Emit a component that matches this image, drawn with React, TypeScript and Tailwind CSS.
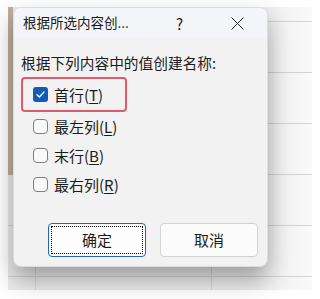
const FONT = "font-['Noto_Sans_CJK_SC','Noto_Sans',sans-serif]";

function CheckBox({ checked }: { checked?: boolean }) {
  if (checked) {
    return (
      <span className="w-[15px] h-[15px] rounded-[3px] bg-[#0f5bb5] flex items-center justify-center shrink-0">
        <svg width="11" height="11" viewBox="0 0 11 11">
          <polyline points="2,5.8 4.4,8 9,3" fill="none" stroke="#ffffff" strokeWidth="1.3" strokeLinecap="round" strokeLinejoin="round" />
        </svg>
      </span>
    );
  }
  return <span className="w-[15px] h-[15px] rounded-[4px] border border-[#7e7e7e] bg-[#f9f9f9] shrink-0" />;
}

function Option({ label, hot, checked }: { label: string; hot: string; checked?: boolean }) {
  return (
    <div className="flex items-center gap-[6px]">
      <CheckBox checked={checked} />
      <span className="text-[15px] leading-none text-[#1b1b1b]">
        {label}(<span className="underline underline-offset-2 decoration-1">{hot}</span>)
      </span>
    </div>
  );
}

export default function App() {
  return (
    <div className={`w-[319px] h-[299px] bg-white pt-[7px] pl-[8px] ${FONT}`}>
      <div className="w-[304px] h-[283px] flex bg-[#f3f3f3] bg-[repeating-linear-gradient(to_bottom,transparent_0,transparent_14px,#d2d2d2_14px,#d2d2d2_15px,transparent_15px,transparent_51px),linear-gradient(to_right,transparent_27px,#d6d6d6_27px,#d6d6d6_28px,transparent_28px,transparent_203px,#d6d6d6_203px,#d6d6d6_204px,transparent_204px),linear-gradient(to_right,#ececec_80%,#fafafa_100%)]">
        {/* row header strip */}
        <div className="w-[5px] flex flex-col">
          <div className="h-[168px] bg-[#bfae9e]" />
        </div>

        {/* dialog */}
        <div className="w-[255px] h-[260px] rounded-[8px] bg-[#f2f2f2] border border-[#dcdcdc] shadow-[0_12px_24px_rgba(0,0,0,0.34)] flex flex-col overflow-hidden">
          <div className="h-[30px] flex items-center pl-[9px] bg-[#f4f5f8] text-[#1a1a1a]">
            <span className="text-[13.5px] leading-none w-[153px]">根据所选内容创...</span>
            <span className="text-[15px] leading-none w-[55px]">?</span>
            <svg width="13" height="13" viewBox="0 0 13 13">
              <path d="M0.5 0.5 L12.5 12.5 M12.5 0.5 L0.5 12.5" stroke="#222" strokeWidth="1" />
            </svg>
          </div>

          <div className="mt-[14px] h-[22px] flex items-center pl-[7px] text-[14.7px] leading-none text-[#1b1b1b]">
            根据下列内容中的值创建名称:
          </div>

          <div className="mt-[3px] ml-[7px] w-[106px] h-[35px] rounded-[4px] border-2 border-[#e35a6e] flex items-center pl-[10px]">
            <Option label="首行" hot="T" checked />
          </div>

          <div className="flex flex-col pl-[19px]">
            <div className="h-[29px] flex items-center">
              <Option label="最左列" hot="L" />
            </div>
            <div className="h-[29px] flex items-center">
              <Option label="末行" hot="B" />
            </div>
            <div className="h-[29px] flex items-center">
              <Option label="最右列" hot="R" />
            </div>
          </div>

          <div className="mt-[24px] flex justify-end gap-[14px] pr-[9px]">
            <button className="w-[98px] h-[34px] rounded-[4px] border border-[#1e66b8] bg-[#fdfdfd] p-[2px]">
              <span className="w-full h-full border border-dotted border-black flex items-center justify-center text-[15px] text-[#1b1b1b]">
                确定
              </span>
            </button>
            <button className="w-[98px] h-[34px] rounded-[4px] border border-[#d3d3d3] bg-[#fbfbfb] flex items-center justify-center text-[15px] text-[#1b1b1b]">
              取消
            </button>
          </div>
        </div>
      </div>
    </div>
  );
}
